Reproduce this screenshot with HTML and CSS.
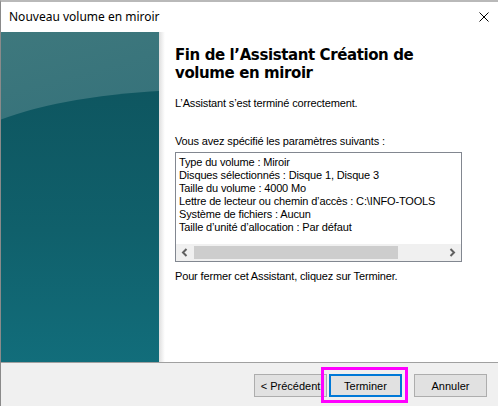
FILE: index.html
```html
<!DOCTYPE html>
<html lang="fr">
<head>
<meta charset="utf-8">
<title>Nouveau volume en miroir</title>
<link rel="stylesheet" href="styles.css">
</head>
<body>
<div class="window">
  <div class="titlebar">
    <span class="title">Nouveau volume en miroir</span>
    <svg class="close" width="10" height="10" viewBox="0 0 10 10"><path d="M0.5 0.5 L9.5 9.5 M9.5 0.5 L0.5 9.5" stroke="#000" stroke-width="1" fill="none"/></svg>
  </div>
  <div class="main">
    <div class="side"></div>
    <div class="shade"></div>
    <div class="content">
      <h1 class="heading">Fin de l’Assistant Création de volume en miroir</h1>
      <p class="txt ok">L’Assistant s’est terminé correctement.</p>
      <p class="txt lead">Vous avez spécifié les paramètres suivants :</p>
      <div class="box">
        <div class="lines">
          <div>Type du volume : Miroir</div>
          <div>Disques sélectionnés : Disque 1, Disque 3</div>
          <div>Taille du volume : 4000 Mo</div>
          <div>Lettre de lecteur ou chemin d’accès : C:\INFO-TOOLS</div>
          <div>Système de fichiers : Aucun</div>
          <div>Taille d’unité d’allocation : Par défaut</div>
        </div>
        <div class="hscroll">
          <svg class="arr" width="17" height="17" viewBox="0 0 17 17"><path d="M10.5 5 L7 8.5 L10.5 12" stroke="#606060" stroke-width="2" fill="none"/></svg>
          <div class="track"><div class="thumb"></div></div>
          <svg class="arr" width="17" height="17" viewBox="0 0 17 17"><path d="M6.5 5 L10 8.5 L6.5 12" stroke="#606060" stroke-width="2" fill="none"/></svg>
        </div>
      </div>
      <p class="txt close-note">Pour fermer cet Assistant, cliquez sur Terminer.</p>
    </div>
  </div>
  <div class="sep"></div>
  <div class="footer">
    <button class="btn">&lt; Précédent</button>
    <button class="btn focus">Terminer</button>
    <button class="btn cancel">Annuler</button>
  </div>
</div>
</body>
</html>
```

FILE: styles.css
```css
html, body {
  margin: 0;
  padding: 0;
  width: 498px;
  height: 406px;
  overflow: hidden;
  background: #ffffff;
}

.window {
  display: flex;
  flex-direction: column;
  height: 404px;
  border-top: 2px solid #b9b9b9;
  border-left: 1px solid #8a8a8a;
  background: #ffffff;
}

.titlebar {
  height: 30px;
  display: flex;
  align-items: center;
  justify-content: space-between;
  padding: 0 9px 0 8px;
  background: #ffffff;
  flex: none;
}

.title {
  font-family: "Noto Sans", "Open Sans", sans-serif;
  font-size: 12px;
  color: #000;
  margin-top: -1px;
}

.main {
  display: flex;
  height: 330px;
  flex: none;
}

.side {
  width: 158px;
  position: relative;
  overflow: hidden;
  background: linear-gradient(165deg, #3e787d 0%, #33707a 45%, #2a676e 100%);
  flex: none;
}

.side::after {
  content: "";
  position: absolute;
  left: -60px;
  top: 58px;
  width: 520px;
  height: 400px;
  border-top-left-radius: 260px 82px;
  border-top-right-radius: 260px 82px;
  background: linear-gradient(180deg, #0e5660 0%, #10606b 35%, #12707e 75%, #147886 100%);
}

.shade {
  width: 6px;
  flex: none;
  background: linear-gradient(90deg, #dedede, #f6f6f6 70%, #ffffff);
}

.content {
  flex: 1;
  padding-left: 10px;
  font-family: "Liberation Sans", Arial, sans-serif;
  font-size: 11px;
  letter-spacing: -0.15px;
  color: #000;
}

.heading {
  font-family: "DejaVu Sans", Verdana, sans-serif;
  font-weight: bold;
  font-size: 15px;
  line-height: 18px;
  margin: 14px 0 0 0;
  width: 260px;
  letter-spacing: -0.4px;
}

.txt {
  margin: 0;
  line-height: 13px;
}

.ok {
  margin-top: 15px;
}

.lead {
  margin-top: 25px;
}

.box {
  margin-top: 4px;
  width: 285px;
  height: 108px;
  border: 1px solid #828790;
  display: flex;
  flex-direction: column;
  justify-content: space-between;
}

.lines {
  padding: 3px 0 0 3px;
  line-height: 13px;
  white-space: nowrap;
}

.hscroll {
  height: 17px;
  display: flex;
  align-items: center;
  background: #f0f0f0;
}

.arr {
  flex: none;
}

.track {
  flex: 1;
  height: 17px;
  display: flex;
  align-items: center;
}

.thumb {
  margin-left: 1px;
  width: 204px;
  height: 13px;
  background: #cdcdcd;
}

.close-note {
  margin-top: 8px;
}

.sep {
  height: 1px;
  background: #a0a0a0;
  flex: none;
}

.footer {
  flex: 1;
  background: #f0f0f0;
  display: flex;
  justify-content: flex-end;
  align-items: flex-start;
  padding: 11px 11px 0 0;
  gap: 2px;
}

.btn {
  width: 73px;
  height: 23px;
  margin: 0;
  padding: 0;
  font-family: "Liberation Sans", Arial, sans-serif;
  font-size: 11px;
  color: #000;
  background: #e1e1e1;
  border: 1px solid #adadad;
  box-sizing: border-box;
}

.focus {
  position: relative;
  border: 2px solid #0078d7;
}

.focus::after {
  content: "";
  position: absolute;
  left: -10px;
  top: -9px;
  right: -8px;
  bottom: -8px;
  border: 3px solid #ff00ff;
}

.cancel {
  margin-left: 10px;
}
```
